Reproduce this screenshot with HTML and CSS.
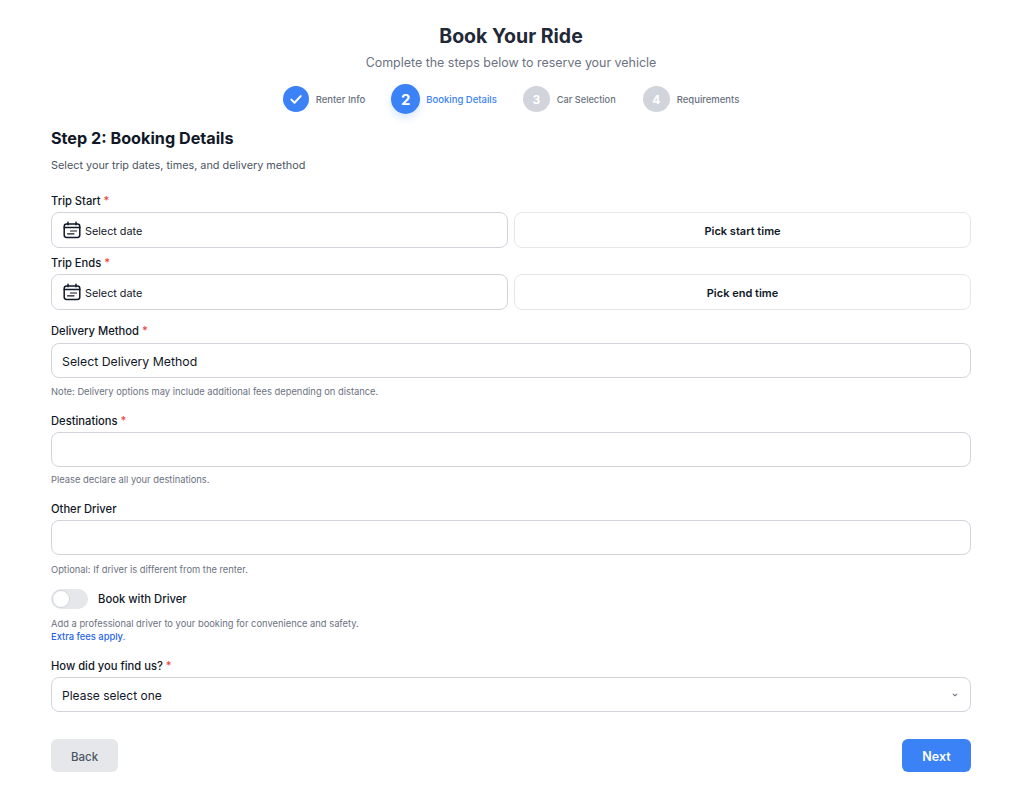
FILE: index.html
```html
<!DOCTYPE html>
<html lang="en">
<head>
<meta charset="utf-8">
<title>Book Your Ride</title>
<link rel="stylesheet" href="styles.css">
</head>
<body>
<main class="page">
  <header class="head">
    <h1 class="title">Book Your Ride</h1>
    <p class="subtitle">Complete the steps below to reserve your vehicle</p>
    <ol class="steps">
      <li class="step step-done">
        <span class="dot"><svg width="14" height="14" viewBox="0 0 24 24" fill="none" stroke="#fff" stroke-width="3.4" stroke-linecap="round" stroke-linejoin="round"><path d="M4 13l5.5 5.5L20 7"/></svg></span>
        <span class="step-name">Renter Info</span>
      </li>
      <li class="step step-active">
        <span class="dot">2</span>
        <span class="step-name">Booking Details</span>
      </li>
      <li class="step step-todo step-car">
        <span class="dot">3</span>
        <span class="step-name">Car Selection</span>
      </li>
      <li class="step step-todo">
        <span class="dot">4</span>
        <span class="step-name">Requirements</span>
      </li>
    </ol>
  </header>

  <section class="intro">
    <h2 class="step-title">Step 2: Booking Details</h2>
    <p class="step-desc">Select your trip dates, times, and delivery method</p>
  </section>

  <form class="form">
    <div class="trip">
      <label class="label">Trip Start <span class="req">*</span></label>
      <div class="pair">
        <div class="box date">
          <svg class="cal" width="18" height="18" viewBox="0 0 18 18" fill="none" stroke="#111827" stroke-width="1.5" stroke-linecap="round"><rect x="1.2" y="3" width="15.6" height="13.4" rx="2.4"/><path d="M1.2 6.6h15.6M5 1.2v2.6M13 1.2v2.6"/><path d="M7.5 10h6M4.5 12.8h6.5" stroke-width="1.2"/></svg>
          <span>Select date</span>
        </div>
        <div class="box time">Pick start time</div>
      </div>
    </div>
    <div class="trip trip-end">
      <label class="label">Trip Ends <span class="req">*</span></label>
      <div class="pair">
        <div class="box date">
          <svg class="cal" width="18" height="18" viewBox="0 0 18 18" fill="none" stroke="#111827" stroke-width="1.5" stroke-linecap="round"><rect x="1.2" y="3" width="15.6" height="13.4" rx="2.4"/><path d="M1.2 6.6h15.6M5 1.2v2.6M13 1.2v2.6"/><path d="M7.5 10h6M4.5 12.8h6.5" stroke-width="1.2"/></svg>
          <span>Select date</span>
        </div>
        <div class="box time">Pick end time</div>
      </div>
    </div>

    <div class="field field-delivery">
      <label class="label">Delivery Method <span class="req">*</span></label>
      <div class="input input-text">Select Delivery Method</div>
      <p class="note">Note: Delivery options may include additional fees depending on distance.</p>
    </div>
    <div class="field">
      <label class="label">Destinations <span class="req">*</span></label>
      <div class="input"></div>
      <p class="note">Please declare all your destinations.</p>
    </div>
    <div class="field">
      <label class="label">Other Driver</label>
      <div class="input"></div>
      <p class="note note-loose">Optional: If driver is different from the renter.</p>
    </div>

    <div class="driver">
      <div class="toggle-row">
        <span class="toggle"><span class="knob"></span></span>
        <span class="toggle-label">Book with Driver</span>
      </div>
      <p class="note note-loose">Add a professional driver to your booking for convenience and safety.</p>
      <p class="note extra">Extra fees apply.</p>
    </div>

    <div class="field field-last">
      <label class="label">How did you find us? <span class="req">*</span></label>
      <div class="input select">
        <span>Please select one</span>
        <svg width="8" height="8" viewBox="0 0 8 8" fill="none" stroke="#6b7280" stroke-width="1.1" stroke-linecap="round" stroke-linejoin="round"><path d="M2.2 3.2L4 4.8l1.8-1.6"/></svg>
      </div>
    </div>

    <div class="actions">
      <button type="button" class="btn btn-back">Back</button>
      <button type="button" class="btn btn-next">Next</button>
    </div>
  </form>
</main>
</body>
</html>
```

FILE: styles.css
```css
* { box-sizing: border-box; }
html, body { margin: 0; padding: 0; background: #fff; }
body { font-family: Inter, "Noto Sans", sans-serif; color: #111827; }
.page { width: 920px; margin-left: 51px; padding-top: 24px; }
.head { text-align: center; }
.title { margin: 0; font-size: 19.5px; line-height: 24px; font-weight: 700; color: #1f2937; }
.subtitle { margin: 5px 0 0; font-size: 12.45px; line-height: 20px; color: #6b7280; }
.steps { list-style: none; margin: 10px 0 0; padding: 0; display: flex; justify-content: center; align-items: center; gap: 26px; height: 32px; }
.step { display: flex; align-items: center; gap: 7px; }
.dot { width: 26px; height: 26px; border-radius: 50%; display: flex; align-items: center; justify-content: center; font-size: 12px; font-weight: 700; color: #fff; }
.step-name { font-size: 9.5px; font-weight: 500; color: #6b7280; }
.step-done .dot { background: #3b82f6; }
.step-active { gap: 6px; }
.step-active .dot { width: 29px; height: 30px; background: #3b82f6; font-size: 15px; box-shadow: 0 4px 8px rgba(59,130,246,.2); }
.step-active .step-name { color: #3b82f6; }
.step-todo .dot { background: #d1d5db; width: 27px; height: 26px; }
.step-car { margin-right: 1px; }
.step-car .step-name { font-size: 9.2px; }
.intro { margin-top: 11px; }
.step-title { margin: 0; font-size: 16.2px; line-height: 24px; font-weight: 700; color: #111827; }
.step-desc { margin: 7px 0 0; font-size: 10.85px; line-height: 16px; color: #4b5563; }
.form { margin-top: 20px; }
.label { display: block; font-size: 11.2px; line-height: 16px; font-weight: 500; color: #111827; }
.req { color: #ef4444; }
.pair { display: grid; grid-template-columns: 1fr 1fr; gap: 6px; margin-top: 3px; }
.box { height: 36px; padding-top: 2px; border-radius: 8px; display: flex; align-items: center; font-size: 11px; background: #fff; }
.date { border: 1px solid #d1d5db; padding-left: 11px; gap: 4px; font-size: 10.8px; }
.cal { flex: none; margin-top: -2px; }
.time { border: 1px solid #e5e7eb; justify-content: center; font-weight: 600; }
.trip-end { margin-top: 7px; }
.field { margin-top: 15px; }
.field .label { margin-bottom: 3px; }
.field-delivery { margin-top: 13px; }
.field-delivery .label { margin-bottom: 4px; }
.input { height: 35px; border: 1px solid #d1d5db; border-radius: 8px; padding: 2px 10px 0; display: flex; align-items: center; font-size: 12px; background: #fff; }
.input-text { font-size: 12.3px; }
.note { margin: 7px 0 0; font-size: 9.35px; line-height: 12px; color: #6b7280; }
.field-delivery .note { margin-top: 8px; }
.note-loose { margin-top: 9px; }
.driver { margin-top: 13px; }
.toggle-row { display: flex; align-items: center; gap: 10px; height: 20px; }
.toggle { width: 37px; height: 20px; border-radius: 10px; background: #e5e7eb; padding: 1px; display: block; }
.knob { display: block; width: 18px; height: 18px; border-radius: 50%; background: #fff; border: 1px solid #d1d5db; }
.toggle-label { font-size: 11.25px; font-weight: 500; }
.note.extra { margin-top: 1px; color: #2563eb; font-weight: 500; }
.field-last { margin-top: 15px; }
.select { justify-content: space-between; padding-right: 11px; }
.select svg { margin-top: -2px; }
.actions { display: flex; justify-content: space-between; margin-top: 27px; }
.btn { height: 33px; border: 0; border-radius: 6px; font-family: inherit; padding: 2px 0 0; }
.btn-back { width: 67px; background: #e5e7eb; color: #4b5563; font-weight: 500; font-size: 11.5px; }
.btn-next { width: 69px; background: #3b82f6; color: #fff; font-weight: 600; font-size: 12.5px; }
```
